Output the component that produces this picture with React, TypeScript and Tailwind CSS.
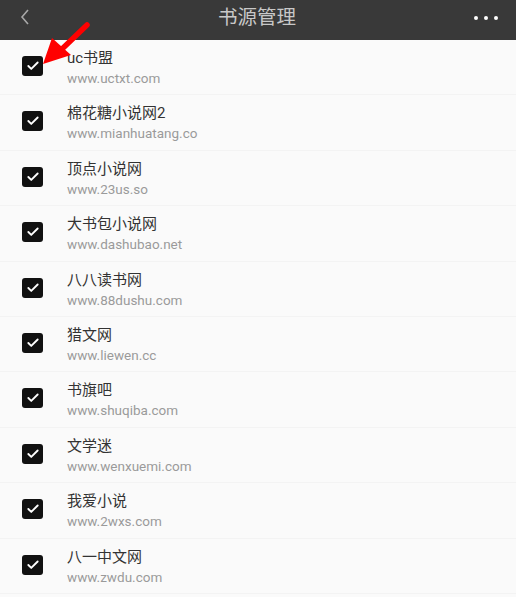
import { Check } from "lucide-react";

interface Source {
    name: string;
    url: string;
}

const sources: Source[] = [
    { name: "uc书盟", url: "www.uctxt.com" },
    { name: "棉花糖小说网2", url: "www.mianhuatang.co" },
    { name: "顶点小说网", url: "www.23us.so" },
    { name: "大书包小说网", url: "www.dashubao.net" },
    { name: "八八读书网", url: "www.88dushu.com" },
    { name: "猎文网", url: "www.liewen.cc" },
    { name: "书旗吧", url: "www.shuqiba.com" },
    { name: "文学迷", url: "www.wenxuemi.com" },
    { name: "我爱小说", url: "www.2wxs.com" },
    { name: "八一中文网", url: "www.zwdu.com" },
];

const SourceRow = ({ source }: { source: Source }) => (
    <div className="flex h-[55.4px] items-start border-b border-[#f3f3f3]">
        <div className="mt-[16px] ml-[22px] flex h-[20px] w-[21px] items-center justify-center rounded-[3px] bg-[#111]">
            <Check className="h-[14px] w-[14px] text-white" strokeWidth={3.2} />
        </div>
        <div className="ml-[24px] pt-[8px]">
            <div className="text-[15px] leading-[20px] text-[#333]">{source.name}</div>
            <div className="text-[13.5px] leading-[20px] text-[#9a9a9a]">{source.url}</div>
        </div>
    </div>
);

const App = () => {
    return (
        <div
            className="relative h-[597px] w-[516px] overflow-hidden bg-[#fafafa]"
            style={{ fontFamily: 'Roboto, "Noto Sans CJK SC", sans-serif' }}
        >
            <header className="flex h-[40px] items-center justify-between bg-[#393939] px-[18px]">
                <svg width="14" height="20" viewBox="0 0 14 20" className="mb-[6px]">
                    <path d="M10 3 L4 10 L10 17" fill="none" stroke="#a8a8a8" strokeWidth="1.6" />
                </svg>
                <h1 className="mb-[4px] ml-[8px] text-[19.5px] text-[#c8c8c8]">书源管理</h1>
                <div className="mb-[4px] flex gap-[6px]">
                    <span className="h-[4px] w-[4px] rounded-full bg-white" />
                    <span className="h-[4px] w-[4px] rounded-full bg-white" />
                    <span className="h-[4px] w-[4px] rounded-full bg-white" />
                </div>
            </header>

            <div>
                {sources.map((s) => (
                    <SourceRow key={s.url} source={s} />
                ))}
            </div>

            {/* red pointer arrow */}
            <svg
                className="pointer-events-none absolute top-0 left-0"
                width="120"
                height="90"
                viewBox="0 0 120 90"
            >
                <path d="M87 25 L62 49" stroke="#f00" strokeWidth="5.5" strokeLinecap="round" />
                <polygon points="43,64 52,38 71,55" fill="#f00" />
            </svg>
        </div>
    );
};

export default App;
